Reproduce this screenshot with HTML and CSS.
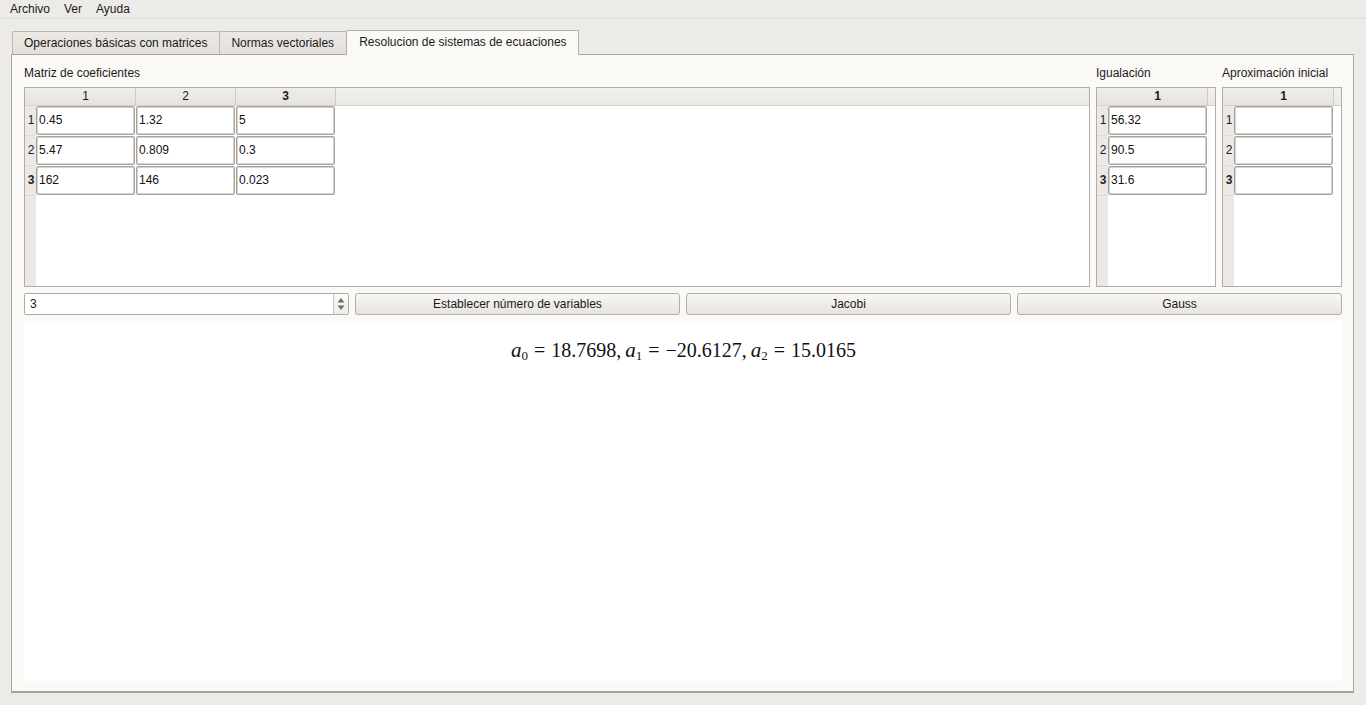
FILE: index.html
```html
<!DOCTYPE html>
<html lang="es">
<head>
<meta charset="utf-8">
<title>Resolucion de sistemas de ecuaciones</title>
<link rel="stylesheet" href="styles.css">
</head>
<body>
<div class="app">
  <div class="menubar">
    <span class="menu">Archivo</span>
    <span class="menu">Ver</span>
    <span class="menu">Ayuda</span>
  </div>
  <div class="main">
    <div class="tabbar">
      <div class="tab">Operaciones básicas con matrices</div>
      <div class="tab">Normas vectoriales</div>
      <div class="tab active">Resolucion de sistemas de ecuaciones</div>
    </div>
    <div class="pane">
      <div class="top">
        <div class="group">
          <div class="label">Matriz de coeficientes</div>
          <div class="table">
            <div class="thead">
              <div class="corner"></div>
              <div class="hcell">1</div>
              <div class="hcell">2</div>
              <div class="hcell bold">3</div>
              <div class="hfill"></div>
            </div>
            <div class="trow">
              <div class="rh">1</div>
              <div class="cell"><div class="edit">0.45</div></div>
              <div class="cell"><div class="edit">1.32</div></div>
              <div class="cell"><div class="edit">5</div></div>
              <div class="rfill"></div>
            </div>
            <div class="trow">
              <div class="rh">2</div>
              <div class="cell"><div class="edit">5.47</div></div>
              <div class="cell"><div class="edit">0.809</div></div>
              <div class="cell"><div class="edit">0.3</div></div>
              <div class="rfill"></div>
            </div>
            <div class="trow">
              <div class="rh bold">3</div>
              <div class="cell"><div class="edit">162</div></div>
              <div class="cell"><div class="edit">146</div></div>
              <div class="cell"><div class="edit focus">0.023</div></div>
              <div class="rfill"></div>
            </div>
            <div class="tfill"><div class="rhfill"></div></div>
          </div>
        </div>
        <div class="group">
          <div class="label">Igualación</div>
          <div class="table small">
            <div class="thead">
              <div class="corner"></div>
              <div class="hcell bold">1</div>
              <div class="hfill"></div>
            </div>
            <div class="trow">
              <div class="rh">1</div>
              <div class="cell"><div class="edit">56.32</div></div>
              <div class="rfill"></div>
            </div>
            <div class="trow">
              <div class="rh">2</div>
              <div class="cell"><div class="edit">90.5</div></div>
              <div class="rfill"></div>
            </div>
            <div class="trow">
              <div class="rh bold">3</div>
              <div class="cell"><div class="edit focus">31.6</div></div>
              <div class="rfill"></div>
            </div>
            <div class="tfill"><div class="rhfill"></div></div>
          </div>
        </div>
        <div class="group">
          <div class="label">Aproximación inicial</div>
          <div class="table small">
            <div class="thead">
              <div class="corner"></div>
              <div class="hcell bold">1</div>
              <div class="hfill"></div>
            </div>
            <div class="trow">
              <div class="rh">1</div>
              <div class="cell"><div class="edit"></div></div>
              <div class="rfill"></div>
            </div>
            <div class="trow">
              <div class="rh">2</div>
              <div class="cell"><div class="edit"></div></div>
              <div class="rfill"></div>
            </div>
            <div class="trow">
              <div class="rh bold">3</div>
              <div class="cell"><div class="edit focus"></div></div>
              <div class="rfill"></div>
            </div>
            <div class="tfill"><div class="rhfill"></div></div>
          </div>
        </div>
      </div>
      <div class="controls">
        <div class="spin">
          <div class="spin-value">3</div>
          <div class="spin-arrows">
            <svg width="8" height="14" viewBox="0 0 8 14"><path d="M4 1 L7.5 5.5 L0.5 5.5 Z" fill="#6f6c68"/><path d="M4 13 L7.5 8.5 L0.5 8.5 Z" fill="#6f6c68"/></svg>
          </div>
        </div>
        <div class="btn">Establecer número de variables</div>
        <div class="btn">Jacobi</div>
        <div class="btn">Gauss</div>
      </div>
      <div class="result">
        <div class="formula"><i>a</i><sub>0</sub><span class="op">=</span>18.7698,<span class="sp"></span><i>a</i><sub>1</sub><span class="op">=</span>−20.6127,<span class="sp"></span><i>a</i><sub>2</sub><span class="op">=</span>15.0165</div>
      </div>
    </div>
  </div>
</div>
</body>
</html>
```

FILE: styles.css
```css
* { box-sizing: border-box; }
html, body { margin: 0; padding: 0; }
body {
  background: #edebe7;
  font-family: "Liberation Sans", Arial, sans-serif;
  font-size: 12px;
  color: #1a1a1a;
  width: 1366px;
  height: 705px;
  overflow: hidden;
}
.app { display: flex; flex-direction: column; height: 705px; }
.menubar {
  height: 19px;
  display: flex;
  align-items: center;
  padding-left: 3px;
  border-bottom: 1px solid #e0ddd8;
}
.menu { padding: 0 7px; line-height: 16px; }
.main {
  flex: 1;
  display: flex;
  flex-direction: column;
  padding: 11px 12px 12px 11px;
}
.tabbar {
  display: flex;
  align-items: flex-end;
  height: 24px;
  padding-left: 1px;
  position: relative;
  z-index: 2;
}
.tab {
  height: 23px;
  line-height: 22px;
  padding: 0 12px 0 11px;
  border: 1px solid #bab6b0;
  border-bottom: none;
  border-radius: 2px 2px 0 0;
  background: linear-gradient(#ece9e4, #e3e0db);
  margin-right: -1px;
  white-space: nowrap;
}
.tab.active {
  height: 25px;
  line-height: 22px;
  margin-bottom: -1px;
  margin-left: 0;
  background: #fbf9f6;
  border-color: #b3afa9;
  padding: 0 11px 0 12px;
}
.pane {
  flex: 1;
  display: flex;
  flex-direction: column;
  gap: 6px;
  background: #fbf9f6;
  border: 1px solid #aaa7a2;
  border-bottom: 2px solid #a5a29d;
  padding: 10px 11px 10px 12px;
}
.top {
  display: grid;
  grid-template-columns: 1fr 120px 120px;
  column-gap: 6px;
}
.group { display: flex; flex-direction: column; }
.label { line-height: 16px; height: 16px; margin-bottom: 6px; }
.table {
  height: 200px;
  border: 1px solid #b1aea9;
  background: #fff;
  display: flex;
  flex-direction: column;
}
.thead {
  display: flex;
  height: 18px;
  border-bottom: 1px solid #d3d0cb;
  background: linear-gradient(#efedea, #e6e3df);
}
.corner { width: 11px; }
.hcell {
  width: 100px;
  text-align: center;
  line-height: 17px;
  border-right: 1px solid #cfccc7;
}
.table .hcell:first-of-type { margin-left: -1px; width: 101px; }
.hfill { flex: 1; background: linear-gradient(#f3f1ee, #ebe9e5); }
.bold { font-weight: bold; }
.trow { display: flex; height: 30px; }
.rh {
  width: 11px;
  background: #ece9e5;
  border-bottom: 1px solid #dedbd6;
  line-height: 29px;
  text-align: center;
  padding-left: 1px;
  color: #222;
}
.cell { width: 100px; padding: 0 1px 1px 0; }
.edit {
  height: 100%;
  border: 1px solid #a7a4a0;
  box-shadow: inset 0 0 0 1px #d6d3ce;
  border-radius: 2px;
  background: #fff;
  padding-left: 2px;
  line-height: 27px;
  color: #111;
}
.edit.focus { border-color: #9aa3ad; }
.rfill { flex: 1; }
.tfill { flex: 1; display: flex; }
.rhfill { width: 11px; background: #ece9e5; }
.controls {
  display: grid;
  grid-template-columns: repeat(4, 1fr);
  column-gap: 6px;
  height: 22px;
}
.spin {
  display: flex;
  border: 1px solid #aeaba6;
  border-radius: 2px;
  background: #fff;
}
.spin-value { flex: 1; padding-left: 5px; line-height: 20px; }
.spin-arrows {
  width: 15px;
  border-left: 1px solid #c8c5c0;
  background: linear-gradient(#fafaf9, #eeece9);
  display: flex;
  align-items: center;
  justify-content: center;
  border-radius: 0 2px 2px 0;
}
.btn {
  border: 1px solid #b2aea8;
  border-radius: 3px;
  background: linear-gradient(#f8f7f5, #e7e4e0);
  text-align: center;
  line-height: 20px;
  color: #1a1a1a;
}
.result {
  flex: 1;
  background: #fff;
  display: flex;
  justify-content: center;
  align-items: flex-start;
  padding-top: 17px;
}
.formula {
  font-family: "Liberation Serif", serif;
  font-size: 20px;
  color: #111;
  line-height: 24px;
  white-space: nowrap;
  padding-left: 1px;
}
.formula i { font-size: 21px; }
.formula sub { font-size: 13px; vertical-align: -3px; line-height: 0; }
.op { padding: 0 6px; }
.sp { display: inline-block; width: 4px; }
```
